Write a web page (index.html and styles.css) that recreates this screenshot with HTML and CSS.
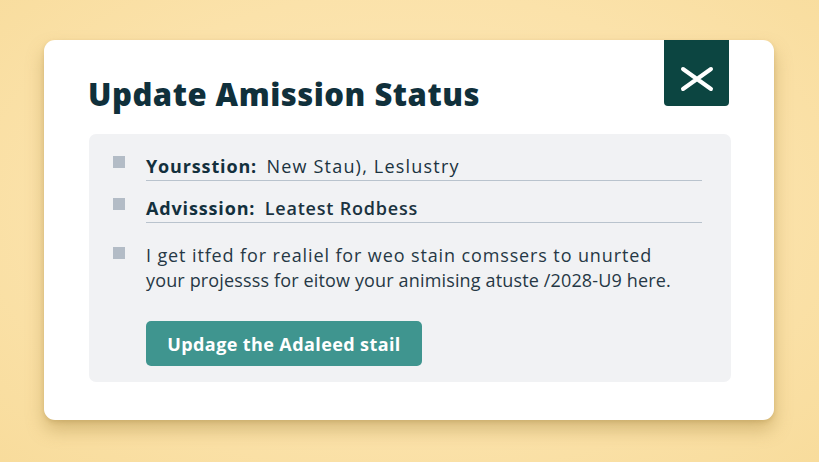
FILE: index.html
```html
<!DOCTYPE html>
<html lang="en">
<head>
<meta charset="utf-8">
<title>Update Amission Status</title>
<link rel="stylesheet" href="styles.css">
</head>
<body>
<div class="card">
  <button class="close" aria-label="Close">
    <svg width="34" height="26" viewBox="0 0 34 26"><path d="M3 3 L31 23 M31 3 L3 23" stroke="#fff" stroke-width="4" stroke-linecap="round"/></svg>
  </button>
  <h1 class="title">Update Amission Status</h1>
  <div class="panel">
    <div class="row">
      <span class="bullet"></span>
      <div class="field"><span class="label">Yoursstion:</span>&nbsp; <span class="value">New Stau), Leslustry</span></div>
    </div>
    <div class="row row-gap">
      <span class="bullet"></span>
      <div class="field"><span class="label">Advisssion:</span>&nbsp; <span class="value strong">Leatest Rodbess</span></div>
    </div>
    <div class="row para-row">
      <span class="bullet bullet-para"></span>
      <p class="para"><span class="line1">I get itfed for realiel for weo stain comssers to unurted</span><br><span class="line2">your projessss for eitow your animising atuste /2028-U9 here.</span></p>
    </div>
    <button class="action">Updage the Adaleed stail</button>
  </div>
</div>
</body>
</html>
```
FILE: styles.css
```css
* { box-sizing: border-box; }
html, body { margin: 0; padding: 0; }
body {
  width: 819px;
  height: 462px;
  overflow: hidden;
  background: radial-gradient(ellipse at 50% 45%, #fde8b8 0%, #fbe2aa 60%, #f8dc9c 100%);
  padding: 40px 0 0 44px;
  font-family: "Open Sans", "Inter", sans-serif;
}
.card {
  position: relative;
  width: 730px;
  height: 380px;
  background: #ffffff;
  border-radius: 11px;
  box-shadow: 0 10px 18px rgba(150, 115, 40, 0.35), 0 2px 4px rgba(150, 115, 40, 0.2);
  padding: 36px 0 0 44px;
}
.close {
  position: absolute;
  top: 0;
  right: 45px;
  width: 65px;
  height: 66px;
  border: 0;
  padding: 26px 0 0 0;
  background: #0c4541;
  border-radius: 0 0 4px 4px;
  display: flex;
  align-items: flex-start;
  justify-content: center;
}
.title {
  margin: 0;
  font-family: "Open Sans", sans-serif;
  font-size: 31px;
  line-height: 36px;
  font-weight: 800;
  letter-spacing: 0.5px;
  color: #10303b;
}
.panel {
  margin: 22px 0 0 1px;
  width: 642px;
  height: 248px;
  background: #f1f2f4;
  border-radius: 7px;
  padding: 19px 0 0 24px;
}
.row {
  display: flex;
  align-items: flex-start;
}
.row-gap { margin-top: 14px; }
.bullet {
  width: 12px;
  height: 12px;
  background: #b3bcc6;
  margin-top: 3px;
  flex: none;
}
.field {
  margin-left: 21px;
  width: 556px;
  font-size: 18px;
  line-height: 26px;
  padding-bottom: 1px;
  border-bottom: 1px solid #b9c3cd;
  color: #1b3340;
  white-space: nowrap;
}
.label { font-weight: 700; color: #13303d; letter-spacing: 0.85px; }
.value { font-weight: 400; letter-spacing: 1.2px; }
.value.strong { font-weight: 600; letter-spacing: 0.8px; }
.para-row { margin-top: 20px; }
.bullet-para { margin-top: 4px; }
.para {
  margin: 0 0 0 21px;
  font-size: 18px;
  line-height: 25px;
  color: #263845;
  white-space: nowrap;
}
.line1 { letter-spacing: 0.88px; }
.line2 { letter-spacing: 0.15px; }
.action {
  display: block;
  margin: 28px 0 0 33px;
  width: 276px;
  height: 45px;
  border: 0;
  border-radius: 5px;
  background: #3f958f;
  color: #ffffff;
  font-family: "Open Sans", sans-serif;
  font-size: 18px;
  font-weight: 700;
  letter-spacing: 0.4px;
  padding: 0;
}
```
